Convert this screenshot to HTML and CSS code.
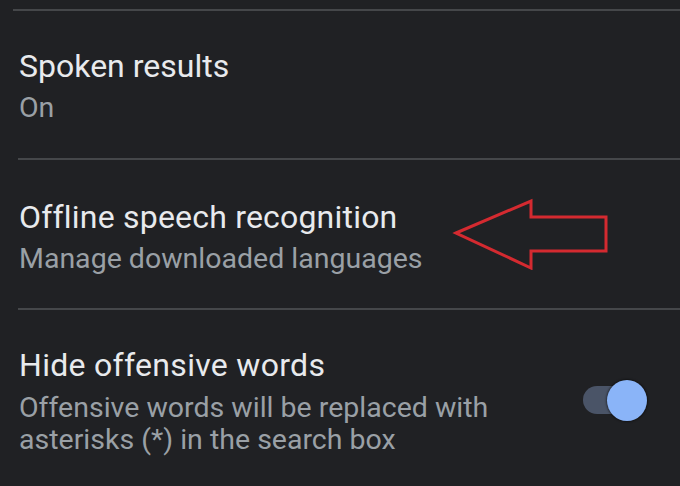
FILE: index.html
```html
<!DOCTYPE html>
<html>
<head>
<meta charset="utf-8">
<link rel="stylesheet" href="styles.css">
</head>
<body>
<div class="screen">
  <div class="divider d1"></div>
  <div class="row r1">
    <div class="text">
      <div class="title">Spoken results</div>
      <div class="sub">On</div>
    </div>
  </div>
  <div class="divider d2"></div>
  <div class="row r2">
    <div class="text">
      <div class="title">Offline speech recognition</div>
      <div class="sub">Manage downloaded languages</div>
    </div>
  </div>
  <div class="divider d3"></div>
  <div class="row r3">
    <div class="text">
      <div class="title">Hide offensive words</div>
      <div class="sub">Offensive words will be replaced with<br>asterisks (*) in the search box</div>
    </div>
    <div class="switch"><div class="track"></div><div class="knob"></div></div>
  </div>
  <svg class="arrow" width="170" height="80" viewBox="440 190 170 80">
    <polygon points="456,233 531,201 531,217 606,217 606,251 531,251 531,268" fill="none" stroke="#d42a30" stroke-width="3" stroke-linejoin="miter"/>
  </svg>
</div>
</body>
</html>
```
FILE: styles.css
```css
html, body { margin: 0; padding: 0; background: #202124; }
.screen {
  position: relative;
  width: 680px;
  height: 486px;
  overflow: hidden;
  background: #202124;
  font-family: Roboto, "Noto Sans", sans-serif;
  display: flex;
  flex-direction: column;
}
.divider { height: 2px; background: #45474a; flex: none; }
.d1 { margin-top: 9px; margin-left: 13px; }
.d2 { margin-left: 18px; }
.d3 { margin-left: 18px; }
.row {
  display: flex;
  align-items: flex-start;
  justify-content: space-between;
  flex: none;
  box-sizing: border-box;
  padding-left: 19px;
  padding-top: 35px;
}
.r1 { height: 147px; }
.r2 { height: 148px; padding-top: 37px; }
.r3 { padding-right: 33px; padding-left: 19px; }
.title { color: #e8eaed; font-size: 32px; line-height: 40px; white-space: nowrap; }
.sub { color: #9aa0a6; font-size: 28.5px; line-height: 32px; margin-top: 6px; white-space: nowrap; }
.r2 .title { letter-spacing: 0.2px; }
.r3 .title { letter-spacing: 0.3px; }
.r3 .sub { margin-top: 7px; }
.switch { position: relative; width: 64px; height: 41px; margin-top: 35px; flex: none; }
.track { position: absolute; left: 0; top: 6px; width: 50px; height: 28px; border-radius: 14px; background: #4a5467; }
.knob { position: absolute; right: 0; top: 0; width: 40px; height: 41px; border-radius: 50%; background: #8ab4f8; box-shadow: 0 0 2px 1px rgba(0,0,0,0.45); }
.arrow { position: absolute; left: 440px; top: 190px; }
```
